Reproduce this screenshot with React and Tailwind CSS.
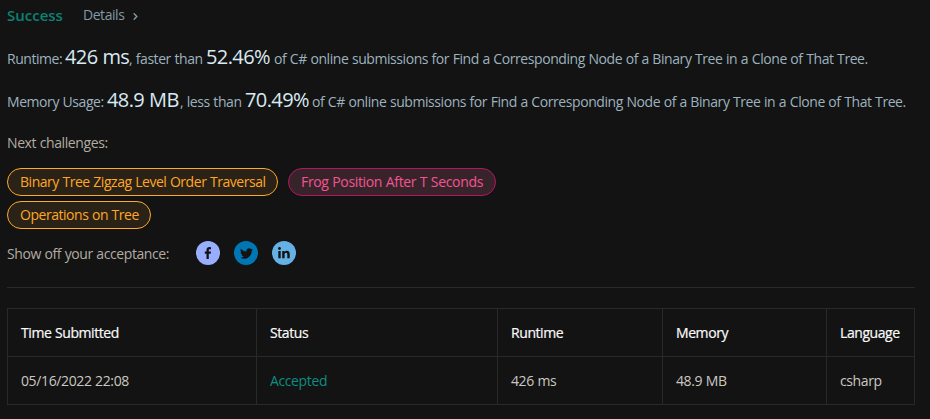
import React from "react";

function Metric({ children, className }) {
  return <span className={`shrink-0 text-xl leading-5 tracking-[-0.6px] text-[#d9eaf2] ${className}`}>{children}</span>;
}

function Tag({ children, className }) {
  return (
    <a className={`flex h-7 items-center rounded-full border pl-3 whitespace-nowrap ${className}`}>
      {children}
    </a>
  );
}

function Social({ className, children }) {
  return (
    <a className={`flex size-6 items-center justify-center rounded-full ${className}`}>{children}</a>
  );
}

const ROW = "grid h-12 grid-cols-[249px_241px_165px_164px_87px] divide-x divide-[#292929] border-b border-[#292929]";
const CELL = "flex items-center pl-[13px]";

export default function App() {
  return (
    <div className="h-[419px] w-[930px] overflow-hidden bg-[#131313] pl-[7px] font-['Open_Sans','Noto_Sans',sans-serif] text-sm leading-5 [word-spacing:0.35px] whitespace-nowrap text-[#b2aca2]">
      <div className="flex h-[29px] items-center">
        <span className="w-[76px] text-[15px] font-semibold text-[#0b8073]">Success</span>
        <span className="w-[49px] tracking-[-0.45px] text-[#8299a6]">Details</span>
        <svg className="mt-1 size-[7px]" viewBox="0 0 7 7" fill="none" stroke="#8299a6" strokeWidth="1.4">
          <path d="M1.7 0.3 4.8 3.5 1.7 6.7" />
        </svg>
      </div>

      <div className="flex h-[57px] items-baseline pt-[18px] text-[#9db2bf]">
        <span className="w-[58px] shrink-0 tracking-[-0.45px]">Runtime:</span>
        <Metric className="w-[64px]">426 ms</Metric>
        <span className="w-[77px] shrink-0 tracking-[-0.43px]">, faster than</span>
        <Metric className="w-[68px]">52.46%</Metric>
        <span className="tracking-[-0.43px]">
          of C# online submissions for Find a Corresponding Node of a Binary Tree in a Clone of That Tree.
        </span>
      </div>
      <div className="flex h-[47px] items-baseline pt-1 text-[#9db2bf]">
        <span className="w-[100px] shrink-0 tracking-[-0.43px]">Memory Usage:</span>
        <Metric className="w-[73px]">48.9 MB</Metric>
        <span className="w-[65px] shrink-0 tracking-[-0.43px]">, less than</span>
        <Metric className="w-[67px]">70.49%</Metric>
        <span className="tracking-[-0.43px]">
          of C# online submissions for Find a Corresponding Node of a Binary Tree in a Clone of That Tree.
        </span>
      </div>

      <div className="h-[35px] tracking-[-0.4px]">Next challenges:</div>

      <div className="flex w-[500px] flex-wrap gap-x-[10px] gap-y-[5px] tracking-[-0.46px]">
        <Tag className="w-[271px] border-[#fdaa2e] bg-[#2a2117] text-[#ffa726]">
          Binary Tree Zigzag Level Order Traversal
        </Tag>
        <Tag className="w-[208px] border-[#b91461] bg-[#37242b] tracking-[-0.34px] text-[#f55390]">
          Frog Position After T Seconds
        </Tag>
        <Tag className="w-[144px] border-[#fdaa2e] bg-[#2a2117] text-[#ffa726]">Operations on Tree</Tag>
      </div>

      <div className="flex h-12 items-center">
        <span className="w-[189px] pt-0.5 tracking-[-0.41px]">Show off your acceptance:</span>
        <div className="flex gap-[14px] text-[#131313]">
          <Social className="bg-[#9aaeff]">
            <svg className="size-[14px]" viewBox="0 0 14 14" fill="currentColor">
              <path d="M5.5 13V7.8H3.8V5.6H5.5V4.1C5.5 2.1 6.6 1.1 8.4 1.1L10 1.2V3.2H8.9C8 3.2 7.8 3.6 7.8 4.3V5.6H10L9.7 7.8H7.8V13Z" />
            </svg>
          </Social>
          <Social className="bg-[#0077b5]">
            <svg className="size-[13px]" viewBox="0 0 24 24" fill="currentColor">
              <path d="M23.95 4.57a10 10 0 0 1-2.82.77 4.96 4.96 0 0 0 2.16-2.72c-.95.55-2 .95-3.13 1.18a4.92 4.92 0 0 0-8.38 4.48C7.69 8.1 4.07 6.13 1.64 3.16a4.92 4.92 0 0 0 1.52 6.57 4.9 4.9 0 0 1-2.23-.61v.06c0 2.38 1.69 4.37 3.95 4.83a5 5 0 0 1-2.21.08 4.94 4.94 0 0 0 4.6 3.42A9.87 9.87 0 0 1 0 19.54a13.99 13.99 0 0 0 7.56 2.21c9.05 0 14-7.5 14-13.98 0-.21 0-.42-.02-.63a9.94 9.94 0 0 0 2.46-2.55z" />
            </svg>
          </Social>
          <Social className="bg-[#65b1e5]">
            <svg className="size-[14px]" viewBox="0 0 14 14" fill="currentColor">
              <circle cx="2.5" cy="2.5" r="1.4" />
              <path d="M1.3 5H3.7V12.3H1.3ZM5.2 5H7.5V6C8 5.2 8.8 4.8 9.8 4.8C12 4.8 12.7 6.2 12.7 8.3V12.3H10.3V8.7C10.3 7.7 10.2 6.8 9.1 6.8C8 6.8 7.6 7.6 7.6 8.7V12.3H5.2Z" />
            </svg>
          </Social>
        </div>
      </div>

      <div className="mt-[10px] h-px w-[908px] bg-[#292929]" />

      <div className="mt-5 w-[908px] border-x border-t border-[#292929]">
        <div className={`${ROW} tracking-[-0.42px] text-[#fafafa] [-webkit-text-stroke:0.2px_#fafafa]`}>
          <div className={CELL}>Time Submitted</div>
          <div className={CELL}>Status</div>
          <div className={CELL}>Runtime</div>
          <div className={CELL}>Memory</div>
          <div className={CELL}>Language</div>
        </div>
        <div className={`${ROW} tracking-[-0.38px] text-[#ccc8c1]`}>
          <div className={CELL}>05/16/2022 22:08</div>
          <div className={`${CELL} text-[#0b8d80]`}>Accepted</div>
          <div className={CELL}>426 ms</div>
          <div className={CELL}>48.9 MB</div>
          <div className={CELL}>csharp</div>
        </div>
      </div>
    </div>
  );
}
